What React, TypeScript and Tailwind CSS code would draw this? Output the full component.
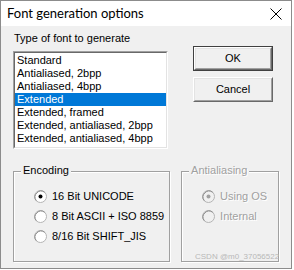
import React from "react";

const ff = { fontFamily: '"Liberation Sans", Arial, sans-serif' };

function Radio({ checked, disabled, label }: { checked?: boolean; disabled?: boolean; label: string }) {
  return (
    <div className="flex items-center h-[20px]">
      <div className="w-[13px] h-[13px] relative">
        <svg width="13" height="13" viewBox="0 0 13 13">
          <circle cx="6.5" cy="6.5" r="6" fill={disabled ? "#f0f0f0" : "#ffffff"} stroke="#b4b4b4" strokeWidth="1" />
          <path d="M2.3 10.7 A6 6 0 0 1 10.7 2.3" fill="none" stroke="#8a8a8a" strokeWidth="1" />
          {checked && <circle cx="6.5" cy="6.5" r="2" fill={disabled ? "#a0a0a0" : "#000000"} />}
        </svg>
      </div>
      <span
        className={`ml-[5px] text-[11px] leading-[13px] ${disabled ? "text-[#a0a0a0] [text-shadow:1px_1px_0_#ffffff]" : "text-black"}`}
      >
        {label}
      </span>
    </div>
  );
}

function GroupBox({ label, disabled, className, children }: { label: string; disabled?: boolean; className: string; children: React.ReactNode }) {
  return (
    <div className={`relative border border-[#a0a0a0] shadow-[inset_1px_1px_0_#ffffff,1px_1px_0_#ffffff] ${className}`}>
      <span
        className={`absolute left-[7px] top-[-8px] px-[2px] bg-[#f0f0f0] text-[11px] leading-[13px] ${disabled ? "text-[#a0a0a0] [text-shadow:1px_1px_0_#ffffff]" : "text-black"}`}
      >
        {label}
      </span>
      {children}
    </div>
  );
}

function Button({ label, isDefault }: { label: string; isDefault?: boolean }) {
  return (
    <div className={`w-[80px] h-[25px] ${isDefault ? "border border-[#404040]" : ""}`}>
      <div className="w-full h-full border border-t-white border-l-white border-b-[#696969] border-r-[#696969]">
        <div className="w-full h-full border border-t-[#e3e3e3] border-l-[#e3e3e3] border-b-[#a0a0a0] border-r-[#a0a0a0] bg-[#f0f0f0] flex items-center justify-center text-[11px] text-black">
          {label}
        </div>
      </div>
    </div>
  );
}

export default function App() {
  const items = [
    "Standard",
    "Antialiased, 2bpp",
    "Antialiased, 4bpp",
    "Extended",
    "Extended, framed",
    "Extended, antialiased, 2bpp",
    "Extended, antialiased, 4bpp",
  ];
  return (
    <div className="w-[294px] h-[270px] bg-white" style={ff}>
      <div className="relative w-[292px] h-[269px] border border-[#8c8c8c] flex flex-col">
        <div className="h-[25px] bg-white flex items-center justify-between pl-[6px] pr-[9px] shrink-0">
          <span className="text-[13px] text-black" style={{ fontFamily: 'Lato, "Noto Sans", sans-serif' }}>
            Font generation options
          </span>
          <svg width="12" height="12" viewBox="0 0 12 12">
            <path d="M0.5 0.5 L11.5 11.5 M11.5 0.5 L0.5 11.5" stroke="#000" strokeWidth="1" />
          </svg>
        </div>
        <div className="flex-1 bg-[#f0f0f0] flex flex-col px-[12px] pt-[6px]">
          <div className="flex">
            <div className="flex flex-col w-[155px]">
              <span className="text-[11px] leading-[13px] text-black ml-[1px]">Type of font to generate</span>
              <div className="mt-[6px] h-[98px] border border-t-[#a0a0a0] border-l-[#a0a0a0] border-b-white border-r-white">
                <div className="w-full h-full border border-t-[#696969] border-l-[#696969] border-b-[#e3e3e3] border-r-[#e3e3e3] bg-white pt-[1px]">
                  {items.map((it, i) => (
                    <div
                      key={it}
                      className={`h-[13px] leading-[13px] text-[11px] pl-[2px] whitespace-nowrap ${i === 3 ? "bg-[#0078d7] text-white" : "text-black"}`}
                    >
                      {it}
                    </div>
                  ))}
                </div>
              </div>
            </div>
            <div className="flex flex-col ml-[25px] mt-[14px] gap-[6px]">
              <Button label="OK" isDefault />
              <Button label="Cancel" />
            </div>
          </div>
          <div className="flex mt-[22px] gap-[11px]">
            <GroupBox label="Encoding" className="w-[159px] h-[91px] pt-[14px] pl-[20px]">
              <Radio checked label="16 Bit UNICODE" />
              <Radio label="8 Bit ASCII + ISO 8859" />
              <Radio label="8/16 Bit SHIFT_JIS" />
            </GroupBox>
            <GroupBox label="Antialiasing" disabled className="w-[99px] h-[91px] pt-[14px] pl-[20px]">
              <Radio checked disabled label="Using OS" />
              <Radio disabled label="Internal" />
            </GroupBox>
          </div>
        </div>
        <span className="absolute left-[194px] top-[251px] text-[8px] leading-[10px] text-[#b8b8b8]">
          CSDN @m0_37056522
        </span>
      </div>
    </div>
  );
}
